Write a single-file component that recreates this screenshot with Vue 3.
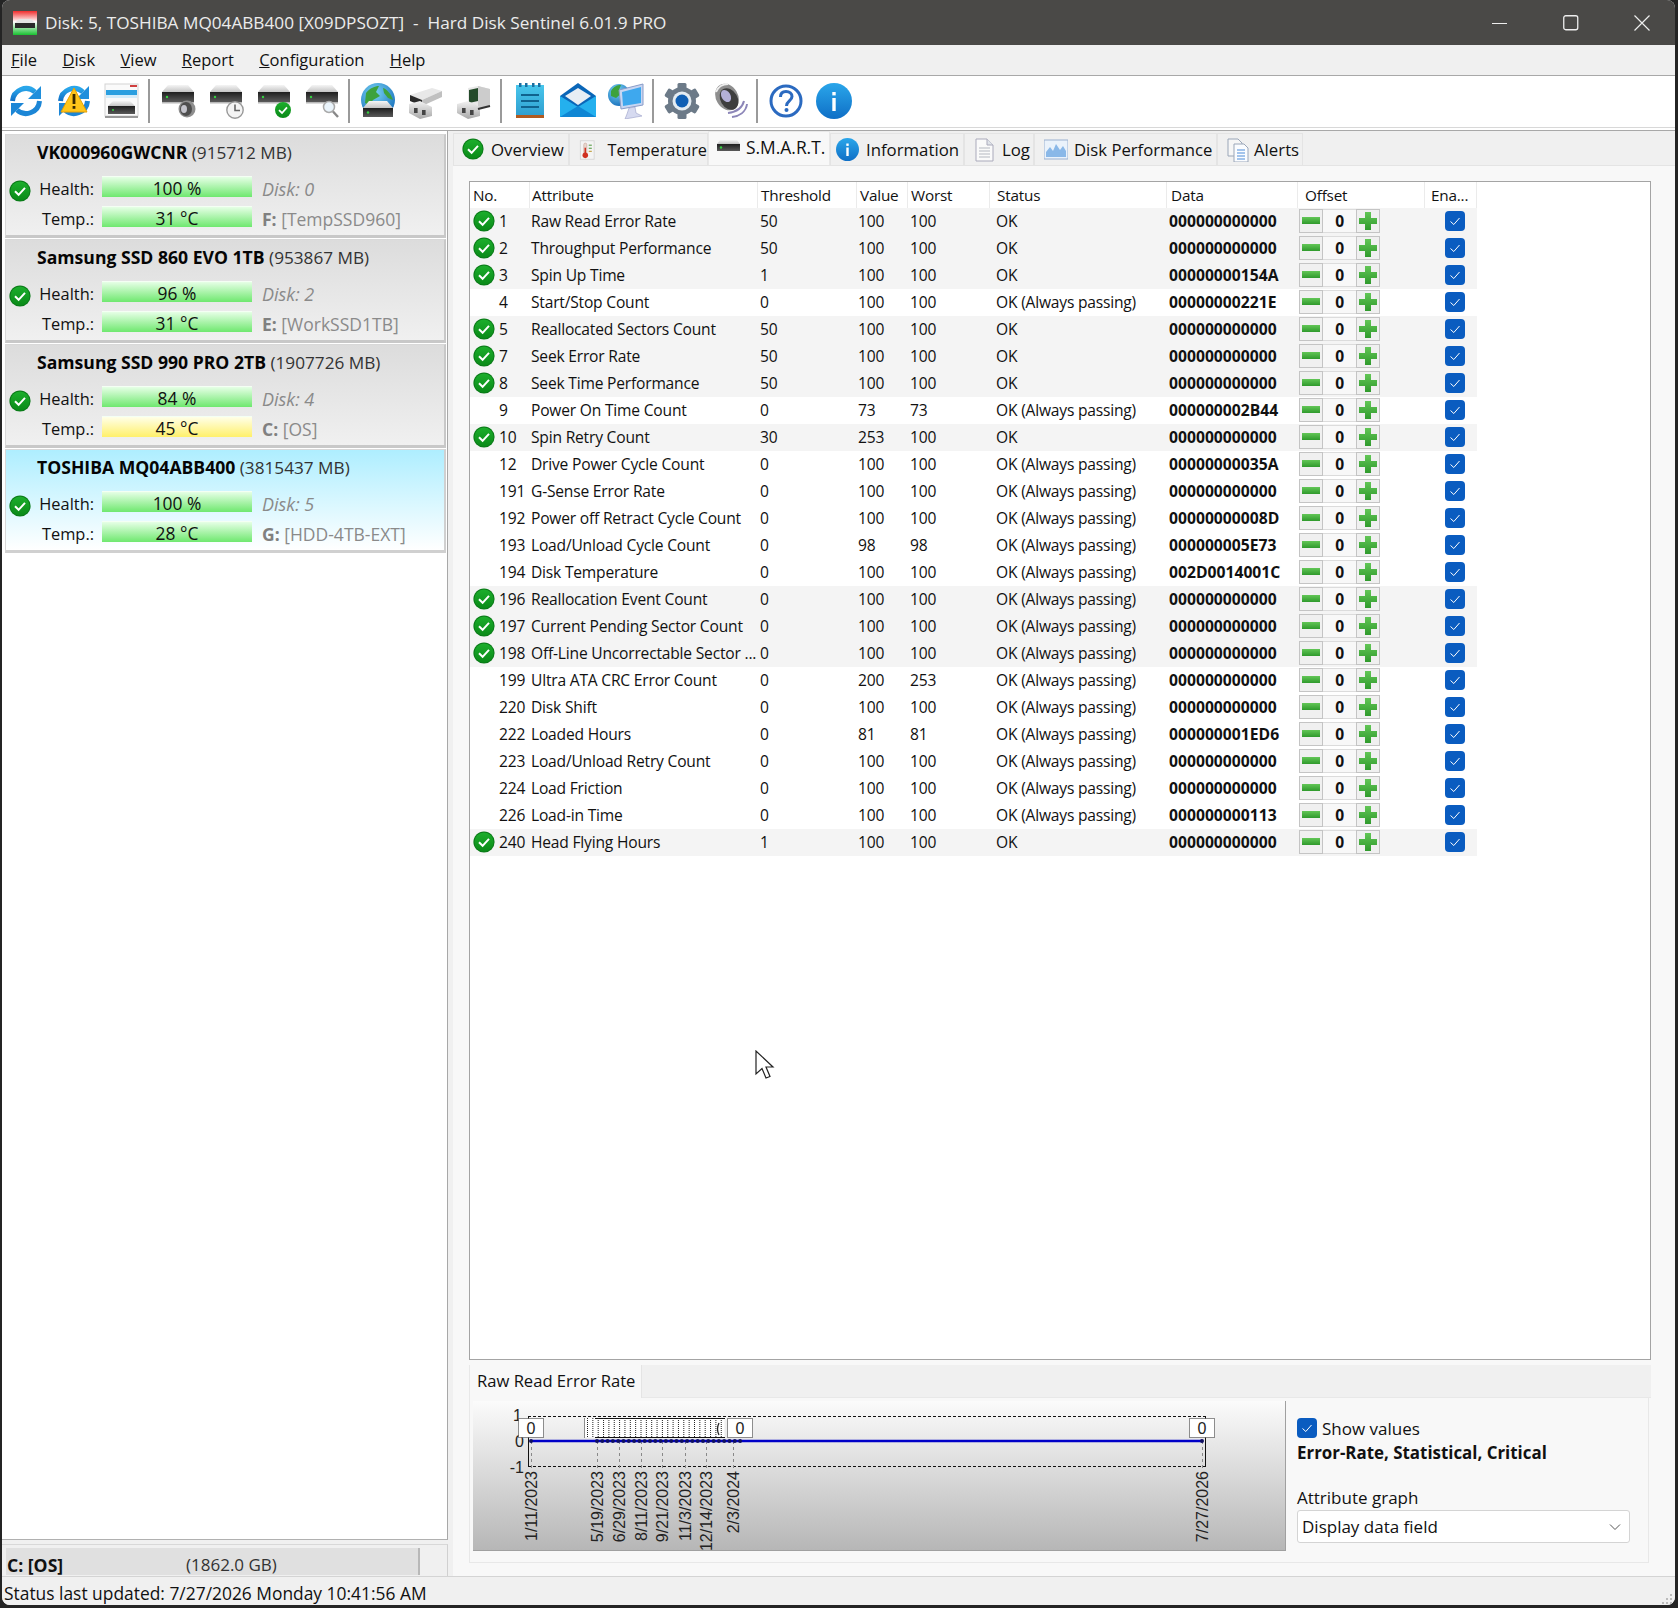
<script setup>
const menus = [['F','ile'],['D','isk'],['V','iew'],['R','eport'],['C','onfiguration'],['H','elp']]
const toolbar = [
  ['refresh','warnrefresh','dlist'],
  ['dspeaker','dclock','dcheck','dsearch'],
  ['globedisk','rem1','rem2'],
  ['note','mail','monitor'],
  ['gear','speaker'],
  ['help','info'],
]
const disks = [
  { name:'VK000960GWCNR', size:'(915712 MB)', health:'100 %', temp:'31 °C', disk:'Disk: 0', vol:'F:', label:'[TempSSD960]', hot:false, sel:false },
  { name:'Samsung SSD 860 EVO 1TB', size:'(953867 MB)', health:'96 %', temp:'31 °C', disk:'Disk: 2', vol:'E:', label:'[WorkSSD1TB]', hot:false, sel:false },
  { name:'Samsung SSD 990 PRO 2TB', size:'(1907726 MB)', health:'84 %', temp:'45 °C', disk:'Disk: 4', vol:'C:', label:'[OS]', hot:true, sel:false },
  { name:'TOSHIBA MQ04ABB400', size:'(3815437 MB)', health:'100 %', temp:'28 °C', disk:'Disk: 5', vol:'G:', label:'[HDD-4TB-EXT]', hot:false, sel:true },
]
const tabs = [
  { t:'Overview', i:'t-check', w:116, pad:8, gap:5, fs:16.8 },
  { t:'Temperature', i:'t-therm', w:139, pad:8, gap:11, fs:16.3 },
  { t:'S.M.A.R.T.', i:'t-disk', w:122, pad:8, gap:5, fs:17.4, active:true },
  { t:'Information', i:'t-info', w:134, pad:5, gap:6, fs:16.8 },
  { t:'Log', i:'t-doc', w:70, pad:8, gap:5, fs:16.8 },
  { t:'Disk Performance', i:'t-perf', w:183, pad:9, gap:6, fs:16.7 },
  { t:'Alerts', i:'t-alert', w:86, pad:9, gap:3, fs:16.8 },
]
const heads = ['No.','Attribute','Threshold','Value','Worst','Status','Data','Offset','Ena...']
const A = 'OK (Always passing)'
const rows = [
  [1,'Raw Read Error Rate',50,100,100,'OK','000000000000',1],
  [2,'Throughput Performance',50,100,100,'OK','000000000000',1],
  [3,'Spin Up Time',1,100,100,'OK','00000000154A',1],
  [4,'Start/Stop Count',0,100,100,A,'00000000221E',0],
  [5,'Reallocated Sectors Count',50,100,100,'OK','000000000000',1],
  [7,'Seek Error Rate',50,100,100,'OK','000000000000',1],
  [8,'Seek Time Performance',50,100,100,'OK','000000000000',1],
  [9,'Power On Time Count',0,73,73,A,'000000002B44',0],
  [10,'Spin Retry Count',30,253,100,'OK','000000000000',1],
  [12,'Drive Power Cycle Count',0,100,100,A,'00000000035A',0],
  [191,'G-Sense Error Rate',0,100,100,A,'000000000000',0],
  [192,'Power off Retract Cycle Count',0,100,100,A,'00000000008D',0],
  [193,'Load/Unload Cycle Count',0,98,98,A,'000000005E73',0],
  [194,'Disk Temperature',0,100,100,A,'002D0014001C',0],
  [196,'Reallocation Event Count',0,100,100,A,'000000000000',1],
  [197,'Current Pending Sector Count',0,100,100,A,'000000000000',1],
  [198,'Off-Line Uncorrectable Sector ...',0,100,100,A,'000000000000',1],
  [199,'Ultra ATA CRC Error Count',0,200,253,A,'000000000000',0],
  [220,'Disk Shift',0,100,100,A,'000000000000',0],
  [222,'Loaded Hours',0,81,81,A,'000000001ED6',0],
  [223,'Load/Unload Retry Count',0,100,100,A,'000000000000',0],
  [224,'Load Friction',0,100,100,A,'000000000000',0],
  [226,'Load-in Time',0,100,100,A,'000000000113',0],
  [240,'Head Flying Hours',1,100,100,'OK','000000000000',1],
]
const dates = [['1/11/2023',531],['5/19/2023',597],['6/29/2023',619],['8/11/2023',641],['9/21/2023',662],['11/3/2023',685],['12/14/2023',706],['2/3/2024',733],['7/27/2026',1202]]
const stripX = Array.from({ length: 26 }, (_, i) => 587.5 + i * 5.35)
const dotX = [531, ...Array.from({ length: 28 }, (_, i) => 597 + i * 5.3), 1202]
</script>

<template>
  <div class="screen">
    <svg class="defs" width="0" height="0" aria-hidden="true">
      <defs>
        <linearGradient id="g-blue" x1="0" y1="0" x2="0" y2="1"><stop offset="0" stop-color="#2aa6ea"/><stop offset="1" stop-color="#0f6fc6"/></linearGradient>
        <linearGradient id="g-dtop" x1="0" y1="0" x2="0" y2="1"><stop offset="0" stop-color="#f5f5f5"/><stop offset="1" stop-color="#c4c4c4"/></linearGradient>
        <linearGradient id="g-dbody" x1="0" y1="0" x2="0" y2="1"><stop offset="0" stop-color="#1e1e1e"/><stop offset="1" stop-color="#5a5a5a"/></linearGradient>
        <linearGradient id="g-title" x1="0" y1="0" x2="0" y2="1"><stop offset="0" stop-color="#f02c2c"/><stop offset=".45" stop-color="#fff"/><stop offset="1" stop-color="#18c030"/></linearGradient>
        <linearGradient id="g-green" x1="0" y1="0" x2="0" y2="1"><stop offset="0" stop-color="#1cae2c"/><stop offset="1" stop-color="#0a8a18"/></linearGradient>
        <linearGradient id="g-gray" x1="0" y1="0" x2="0" y2="1"><stop offset="0" stop-color="#f2f2f2"/><stop offset="1" stop-color="#a8a8a8"/></linearGradient>
        <linearGradient id="g-note" x1="0" y1="0" x2="0" y2="1"><stop offset="0" stop-color="#48c6ec"/><stop offset="1" stop-color="#2f9fd0"/></linearGradient>
        <linearGradient id="g-plus" x1="0" y1="0" x2="0" y2="1"><stop offset="0" stop-color="#62c656"/><stop offset="1" stop-color="#2f9a2c"/></linearGradient>
        <radialGradient id="g-globe" cx=".4" cy=".3" r=".8"><stop offset="0" stop-color="#7ad4f4"/><stop offset="1" stop-color="#1068b8"/></radialGradient>

        <g id="ok">
          <circle cx="11" cy="11" r="10.6" fill="#0a7a18"/>
          <circle cx="11" cy="11" r="9.6" fill="url(#g-green)"/>
          <path d="M6 11.3 9.6 14.8 16 7.8" fill="none" stroke="#fff" stroke-width="2"/>
        </g>
        <g id="disk">
          <path d="M8 2H28L34 9H2Z" fill="url(#g-dtop)"/>
          <rect x="2" y="9" width="32" height="10" fill="url(#g-dbody)"/>
          <rect x="2" y="19" width="32" height="1.5" fill="#b8b8b8"/>
          <circle cx="7" cy="14" r="1.2" fill="#35d040"/>
        </g>
        <g id="refresh">
          <path d="M4.5 18A13.5 13.5 0 0 1 27 9" fill="none" stroke="url(#g-blue)" stroke-width="5"/>
          <path d="M33 3V16H20Z" fill="#1f8fdc"/>
          <path d="M31.5 18A13.5 13.5 0 0 1 9 27" fill="none" stroke="#1c86d6" stroke-width="5"/>
          <path d="M3 33V20H16Z" fill="#1c86d6"/>
        </g>
        <g id="warnrefresh">
          <use href="#refresh"/>
          <path d="M18 5 31 29H5Z" fill="#ffc61a" stroke="#e8a000" stroke-linejoin="round"/>
          <rect x="16.6" y="11" width="2.8" height="10" fill="#3a2a00"/>
          <rect x="16.6" y="23" width="2.8" height="2.8" fill="#3a2a00"/>
        </g>
        <g id="dlist">
          <rect x="1" y="1" width="33" height="32" fill="#fafafa" stroke="#d4d4d4"/>
          <rect x="1" y="33" width="33" height="2" fill="#999"/>
          <path d="M2 7H33V12H2Z" fill="#2b9fe0"/>
          <path d="M2 12H33V15H2Z" fill="#d4ecfa"/>
          <rect x="26" y="2" width="7" height="2" fill="#d04040"/>
          <path d="M9 18H26L31 23H4Z" fill="url(#g-dtop)"/>
          <rect x="4" y="23" width="27" height="8" fill="url(#g-dbody)"/>
          <circle cx="9" cy="27" r="1" fill="#35d040"/>
        </g>
        <g id="dspeaker">
          <use href="#disk"/>
          <circle cx="27" cy="26" r="8.500" fill="#8e8e8e"/><ellipse cx="26" cy="26" rx="6" ry="7" fill="#4e4e4e"/><ellipse cx="24" cy="26" rx="3" ry="4" fill="#c4c4cc"/>
        </g>
        <g id="dclock">
          <use href="#disk"/>
          <circle cx="27" cy="27" r="8.2" fill="#f4f4f4" stroke="#999" stroke-width="1.4"/>
          <path d="M27 21.5V27.5H32" fill="none" stroke="#666" stroke-width="1.6"/>
        </g>
        <g id="dcheck">
          <use href="#disk"/>
          <circle cx="27" cy="27" r="8" fill="url(#g-green)"/>
          <path d="M23 27.2 26 30 31 24.4" fill="none" stroke="#fff" stroke-width="1.8"/>
        </g>
        <g id="dsearch">
          <use href="#disk"/>
          <circle cx="25" cy="24" r="5.5" fill="#eaf4fb" stroke="#aaa" stroke-width="1.5"/>
          <path d="M29 28.5 34 34" stroke="#888" stroke-width="2.4"/>
        </g>
        <g id="globedisk">
          <circle cx="18" cy="17" r="17" fill="url(#g-globe)"/>
          <path d="M6 10C10 5 15 3 19 3L16 9 20 13 13 17 9 22 5 20Z M23 5C27 6 31 11 33 17L28 15 24 10Z" fill="#3da23c"/>
          <path d="M9 18H27L33 25H3Z" fill="url(#g-dtop)"/>
          <rect x="3" y="25" width="30" height="9" fill="url(#g-dbody)"/>
          <circle cx="8" cy="29.500" r="1.200" fill="#35d040"/>
        </g>
        <g id="rem1">
          <path d="M2 12 24 5 34 8 14 17Z" fill="#e8e8e8"/>
          <path d="M14 17 34 8V14L14 23Z" fill="#c0c0c0"/>
          <path d="M2 12 14 17V23L2 18Z" fill="#2a2a2a"/>
          <path d="M1 21 12 18 24 24V33L12 36 1 30Z" fill="url(#g-gray)"/>
          <rect x="6" y="25" width="3.600" height="5" fill="#444"/><rect x="14" y="27" width="3.600" height="5" fill="#444"/>
        </g>
        <g id="rem2">
          <path d="M12 5 22 3 34 6 34 23 22 26 12 23Z" fill="#e8e8e8"/>
          <path d="M22 3 34 6V23L22 26Z" fill="#cccccc"/>
          <path d="M13 7 22 5V18L13 20Z" fill="#244a2a"/>
          <path d="M1 21 12 18 24 24V33L12 36 1 30Z" fill="url(#g-gray)"/>
          <rect x="6" y="25" width="3.600" height="5" fill="#444"/><rect x="14" y="27" width="3.600" height="5" fill="#444"/>
          <path d="M22 26 34 23" stroke="#333" stroke-width="2"/>
        </g>
        <g id="note">
          <rect x="4" y="2" width="28" height="30" fill="url(#g-note)"/>
          <rect x="4" y="32" width="28" height="3" fill="#b05a20"/>
          <g fill="#1a6ea0"><rect x="7" y="0" width="2.500" height="4"/><rect x="13" y="0" width="2.500" height="4"/><rect x="20" y="0" width="2.500" height="4"/><rect x="26" y="0" width="2.500" height="4"/></g>
          <g fill="#10628e"><rect x="9" y="11" width="18" height="2"/><rect x="9" y="17" width="18" height="2"/><rect x="9" y="23" width="18" height="2"/></g>
        </g>
        <g id="mail">
          <path d="M0 13 18 0 36 13V34H0Z" fill="#0a66b8"/>
          <path d="M5 13 18 5 31 13 18 22Z" fill="#e8eef4"/>
          <path d="M0 13 18 24 36 13V34H0Z" fill="#24b0ee"/>
          <path d="M0 34 18 23 36 34Z" fill="#0f86d4"/>
        </g>
        <g id="monitor">
          <circle cx="11" cy="12" r="11" fill="url(#g-globe)"/>
          <path d="M3 8C6 3 9 2 13 2L11 7 14 10 8 15 3 13Z" fill="#3da23c"/>
          <path d="M11 7 35 1V22L13 26Z" fill="#c8d6f2" stroke="#8a9cc8"/>
          <path d="M14 9 33 4V20L15 23Z" fill="#3ea8ee"/>
          <path d="M21 25 27 24 28 30 34 33 17 36 19 31Z" fill="#d6daf0" stroke="#9aa0c8" stroke-width=".6"/>
        </g>
        <g id="gear" fill="#6c7a88">
          <circle cx="18" cy="18" r="14"/>
          <rect x="13.500" y="0" width="9" height="36" rx="1.500"/>
          <rect x="13.500" y="0" width="9" height="36" rx="1.500" transform="rotate(60 18 18)"/>
          <rect x="13.500" y="0" width="9" height="36" rx="1.500" transform="rotate(120 18 18)"/>
          <circle cx="18" cy="18" r="9.500" fill="#e4ecf2"/>
          <circle cx="18" cy="18" r="6.500" fill="#0f5fb4"/>
        </g>
        <g id="speaker">
          <path d="M16 30C24 29 30 26 32 18M20 34C27 33 34 29 35 21" fill="none" stroke="#8c86b8" stroke-width="2"/>
          <ellipse cx="15" cy="14" rx="11" ry="14" fill="#8e8e8e" transform="rotate(-30 15 14)"/>
          <ellipse cx="17" cy="16" rx="8.500" ry="11.500" fill="#3e3e3e" transform="rotate(-30 17 16)"/>
          <ellipse cx="14" cy="13" rx="4.500" ry="6.500" fill="#b4b0d8" transform="rotate(-30 14 13)"/>
          <path d="M4 9C6 4 11 1 16 1" stroke="#eee" stroke-width="2" fill="none"/>
        </g>
        <g id="help">
          <circle cx="18" cy="18" r="15" fill="#fff" stroke="#2b6ac0" stroke-width="3"/>
          <path d="M12.500 14C12.500 10 15 8.500 18 8.500 21.500 8.500 24 10.500 24 13.500 24 18 18.500 18 18.500 23" fill="none" stroke="#2b6ac0" stroke-width="3"/>
          <circle cx="18.500" cy="27" r="2" fill="#2b6ac0"/>
        </g>
        <g id="info">
          <circle cx="18" cy="18" r="18" fill="url(#g-blue)"/>
          <rect x="16.300" y="15" width="3.400" height="13" fill="#fff"/>
          <rect x="16.300" y="9" width="3.400" height="3.400" fill="#fff"/>
        </g>

        <g id="t-check"><use href="#ok"/></g>
        <g id="t-therm">
          <rect x="3" y="0" width="18" height="24" fill="#f4f4f4" stroke="#d0d0d0"/>
          <rect x="7.500" y="3" width="4" height="14" rx="2" fill="#e8d8d0" stroke="#c09080" stroke-width=".6"/>
          <rect x="8.500" y="9" width="2" height="9" fill="#d03020"/>
          <circle cx="9.500" cy="19" r="3.600" fill="#d03020"/>
          <g fill="#60a050"><rect x="14" y="5" width="4" height="1.500"/><rect x="14" y="9" width="4" height="1.500"/></g>
          <g fill="#c0a040"><rect x="14" y="13" width="4" height="1.500"/></g>
        </g>
        <g id="t-disk">
          <path d="M3 5H20L23 9H0Z" fill="url(#g-dtop)"/>
          <rect y="9" width="23" height="7" fill="url(#g-dbody)"/>
          <circle cx="4" cy="12.500" r="1.200" fill="#35d040"/>
        </g>
        <g id="t-info">
          <circle cx="11.500" cy="11.500" r="11.500" fill="url(#g-blue)"/>
          <rect x="10.300" y="9.500" width="2.400" height="8.500" fill="#fff"/>
          <rect x="10.300" y="5.500" width="2.400" height="2.400" fill="#fff"/>
        </g>
        <g id="t-doc">
          <path d="M3 1H14L20 7V23H3Z" fill="#fafafa" stroke="#aab"/>
          <path d="M14 1V7H20" fill="#e0e4ea" stroke="#aab"/>
          <path d="M6 10H17M6 13H17M6 16H17M6 19H17" stroke="#b4b8c0"/>
        </g>
        <g id="t-perf">
          <rect x="0" y="2" width="24" height="19" fill="#eaf2fb" stroke="#9ab0d0"/>
          <path d="M2 19V14L6 9 9 13 12 6 16 12 19 8 22 13V19Z" fill="#8ab8e8"/>
        </g>
        <g id="t-alert">
          <path d="M1 1H11L15 5V18H1Z" fill="#f6f6f6" stroke="#9aa6b8"/>
          <path d="M7 6H17L21 10V24H7Z" fill="#fafcff" stroke="#9aa6b8"/>
          <path d="M10 12H18M10 15H18M10 18H18M10 21H18" stroke="#4c8cd8"/>
        </g>
      </defs>
    </svg>

    <div class="frame">
      <header class="titlebar">
        <svg class="appicon" width="24" height="24" viewBox="0 0 24 24">
          <rect width="24" height="24" fill="url(#g-title)"/>
          <path d="M6 8H18L22 12H2Z" fill="#e4e4e4"/>
          <rect x="2" y="12" width="20" height="5" fill="#2a2a2a"/>
        </svg>
        <span class="titletext">Disk: 5, TOSHIBA MQ04ABB400 [X09DPSOZT]&nbsp;&nbsp;-&nbsp;&nbsp;Hard Disk Sentinel 6.01.9 PRO</span>
        <div class="winctl">
          <svg width="16" height="16" viewBox="0 0 16 16"><path d="M0 8.500H15" stroke="#eee"/></svg>
          <svg width="16" height="16" viewBox="0 0 16 16"><rect x=".75" y=".75" width="14" height="14" rx="2" fill="none" stroke="#eee" stroke-width="1.300"/></svg>
          <svg width="16" height="16" viewBox="0 0 16 16"><path d="M.5.500 15.500 15.500M15.500.500 .5 15.500" stroke="#eee" stroke-width="1.200"/></svg>
        </div>
      </header>

      <nav class="menubar">
        <span v-for="m in menus" :key="m[0]" class="menu"><u>{{ m[0] }}</u>{{ m[1] }}</span>
      </nav>

      <div class="toolbar">
        <template v-for="(grp, gi) in toolbar" :key="gi">
          <span v-if="gi" class="tsep"></span>
          <span v-for="ic in grp" :key="ic" class="tbtn">
            <svg width="36" height="36" viewBox="0 0 36 36"><use :href="'#' + ic"/></svg>
          </span>
        </template>
      </div>
      <div class="rule"></div>

      <div class="body">
        <aside class="left">
          <div class="disklist">
            <div v-for="d in disks" :key="d.name" class="card" :class="{ sel: d.sel }">
              <div class="cardtitle"><b>{{ d.name }}</b>&nbsp;<span class="size">{{ d.size }}</span></div>
              <div class="cardbody">
                <svg class="cardok" width="22" height="22" viewBox="0 0 22 22"><use href="#ok"/></svg>
                <div class="cardrows">
                  <div class="crow">
                    <span class="clabel">Health:</span>
                    <span class="bar">{{ d.health }}</span>
                    <i class="cinfo disknum">{{ d.disk }}</i>
                  </div>
                  <div class="crow">
                    <span class="clabel">Temp.:</span>
                    <span class="bar" :class="{ hot: d.hot }">{{ d.temp }}</span>
                    <span class="cinfo"><b>{{ d.vol }}</b>&nbsp;{{ d.label }}</span>
                  </div>
                </div>
              </div>
            </div>
          </div>
          <div class="volbar">
            <div class="volmain"><b>C: [OS]</b><span class="volsize">(1862.0 GB)</span></div>
            <div class="volside"></div>
          </div>
        </aside>

        <main class="right">
          <div class="tabs">
            <div v-for="t in tabs" :key="t.t" class="tab" :class="{ active: t.active }" :style="{ width: t.w + 'px', paddingLeft: t.pad + 'px', gap: t.gap + 'px', fontSize: t.fs + 'px' }">
              <svg width="24" height="24" viewBox="0 0 24 24"><use :href="'#' + t.i"/></svg>
              <span>{{ t.t }}</span>
            </div>
          </div>
          <div class="content">
            <div class="tablebox">
              <div class="grid head">
                <div v-for="h in heads" :key="h" class="hcell">{{ h }}</div>
              </div>
              <div v-for="r in rows" :key="r[0]" class="grid row" :class="{ flagged: r[7] }">
                <div class="no">
                  <svg v-if="r[7]" class="rowok" width="22" height="22" viewBox="0 0 22 22"><use href="#ok"/></svg>
                  <span class="num">{{ r[0] }}</span>
                </div>
                <div class="attr">{{ r[1] }}</div>
                <div class="c-thr">{{ r[2] }}</div>
                <div class="c-val">{{ r[3] }}</div>
                <div class="c-wor">{{ r[4] }}</div>
                <div class="c-sta">{{ r[5] }}</div>
                <div class="c-dat">{{ r[6] }}</div>
                <div class="offset">
                  <span class="obtn"><i class="minus"></i></span>
                  <span class="oval">0</span>
                  <span class="obtn"><svg width="20" height="20" viewBox="0 0 20 20"><path d="M7 1H13V7H19V13H13V19H7V13H1V7H7Z" fill="url(#g-plus)"/></svg></span>
                </div>
                <div class="ena">
                  <span class="cbox"><svg width="20" height="20" viewBox="0 0 20 20"><path d="M5.500 10.500 8.800 13.500 14.500 7" fill="none" stroke="#fff"/></svg></span>
                </div>
              </div>
              <svg class="cursor" width="20" height="30" viewBox="0 0 20 30">
                <path d="M1 1V24L7 18.500 11 28 15 26.500 11 17H18Z" fill="#fff" stroke="#222" stroke-width="1.200"/>
              </svg>
            </div>

            <div class="gtabstrip"><div class="gtab">Raw Read Error Rate</div></div>
            <div class="graphpanel">
              <svg class="chart" width="813" height="150" viewBox="473 1401 813 150">
                <defs>
                  <linearGradient id="g-chart" x1="0" y1="0" x2="0" y2="1"><stop offset="0" stop-color="#fbfbfb"/><stop offset="1" stop-color="#b6b6b6"/></linearGradient>
                </defs>
                <rect x="473" y="1401" width="813" height="150" fill="url(#g-chart)"/>
                <path d="M473 1550.500H1286M1285.500 1401V1551" stroke="#a0a0a0"/>
                <g class="axis">
                  <text x="522" y="1421" text-anchor="end">1</text>
                  <text x="524" y="1447" text-anchor="end">0</text>
                  <text x="524" y="1473" text-anchor="end">-1</text>
                </g>
                <path d="M528.500 1416V1467M1205.500 1416V1467" stroke="#111"/>
                <path d="M528 1416.500H1206M528 1466.500H1206" stroke="#111" stroke-dasharray="3 2"/>
                <path v-for="d in dates" :key="d[0]" :d="`M${d[1]}.5 1441V1470`" stroke="#888" stroke-dasharray="3 3"/>
                <rect x="584.500" y="1418.500" width="140" height="19" fill="#fff"/>
                <path d="M595 1418.500H725M595 1437.500H725" stroke="#111"/>
                <path v-for="x in stripX" :key="x" :d="`M${x} 1418V1438`" stroke="#222" stroke-dasharray="1 1"/>
                <path d="M719 1423Q716 1429 719 1435" fill="none" stroke="#222" stroke-width="1.300"/>
                <g class="vbox">
                  <rect x="518.500" y="1418.500" width="25" height="19"/>
                  <rect x="727.500" y="1418.500" width="25" height="19"/>
                  <rect x="1189.500" y="1418.500" width="25" height="19"/>
                  <path d="M584.500 1418.500V1437.500"/>
                </g>
                <g class="axis">
                  <text x="531" y="1434" text-anchor="middle">0</text>
                  <text x="740" y="1434" text-anchor="middle">0</text>
                  <text x="1202" y="1434" text-anchor="middle">0</text>
                </g>
                <path d="M531 1441H1202" stroke="#0000c8" stroke-width="2.500"/>
                <circle v-for="x in dotX" :key="x" :cx="x" cy="1441" r="2" fill="#101060"/>
                <text v-for="d in dates" :key="'l' + d[0]" class="dlabel" text-anchor="end" :transform="`translate(${d[1] + 6} 1471) rotate(-90)`">{{ d[0] }}</text>
              </svg>
              <div class="gside">
                <div class="showvals">
                  <span class="cbox"><svg width="20" height="20" viewBox="0 0 20 20"><path d="M5.500 10.500 8.800 13.500 14.500 7" fill="none" stroke="#fff"/></svg></span>
                  <span>Show values</span>
                </div>
                <div class="gbold">Error-Rate, Statistical, Critical</div>
                <div class="glabel">Attribute graph</div>
                <div class="select">
                  <span>Display data field</span>
                  <svg width="12" height="8" viewBox="0 0 12 8"><path d="M1 1.500 6 6.500 11 1.500" fill="none" stroke="#555"/></svg>
                </div>
              </div>
            </div>
          </div>
        </main>
      </div>

      <footer class="status">
        <span>Status last updated: 7/27/2026 Monday 10:41:56 AM</span>
        <svg class="grip" width="12" height="12" viewBox="0 0 12 12" fill="#bbb"><rect x="9" y="1" width="2" height="2"/><rect x="5" y="5" width="2" height="2"/><rect x="9" y="5" width="2" height="2"/><rect x="1" y="9" width="2" height="2"/><rect x="5" y="9" width="2" height="2"/><rect x="9" y="9" width="2" height="2"/></svg>
      </footer>
    </div>
  </div>
</template>

<style>
html, body { margin: 0; background: #242424; }
</style>

<style scoped>
.screen {
  width: 1678px; height: 1608px; box-sizing: border-box; padding: 0 3px 3px 2px;
  background: #242424; overflow: hidden;
  font-family: "Open Sans", "Noto Sans", sans-serif; font-size: 17px; color: #111;
}
.defs { position: absolute; }
.frame {
  height: 1605px; display: flex; flex-direction: column; background: #f0f0f0;
  border-radius: 8px; overflow: hidden;
}
.titlebar {
  height: 45px; flex: none; background: #4a4947; display: flex; align-items: center;
  padding-left: 11px; color: #ececec; white-space: pre; font-size: 17.2px;
}
.appicon { margin-right: 8px; }
.titletext { flex: 1; }
.winctl { display: flex; gap: 55px; padding-right: 25px; }
.menubar {
  flex: none; background: #f0f0f0; border-bottom: 1px solid #a8a8a8;
  display: flex; align-items: center; padding-left: 9px; gap: 25.3px; font-size: 16.5px;
  padding-bottom: 2px; box-sizing: content-box; height: 28px;
}
.toolbar { height: 51px; flex: none; background: #fff; display: flex; align-items: center; padding-bottom: 2px; box-sizing: border-box; }
.tbtn { width: 48px; display: flex; justify-content: center; }
.tsep { width: 8px; height: 44px; box-sizing: border-box; border-left: 2px solid #9a9a9a; position: relative; left: 2px; }
.rule { flex: none; background: #fff; border-top: 1px solid #d8d8d8; border-bottom: 1px solid #a8a8a8; height: 2px; }
.body { flex: 1; display: flex; min-height: 0; }
.left { width: 446px; flex: none; display: flex; flex-direction: column; background: #f0f0f0; }
.disklist { flex: 1; background: #fff; border-right: 1px solid #a8a8a8; border-bottom: 1px solid #b0b0b0; padding: 3px 0 0 3px; margin-bottom: 4px; }
.card {
  width: 441px; height: 104px; box-sizing: border-box; margin-bottom: 1px;
  background: linear-gradient(#dcdcdc, #f0f0f0);
  border: 1px solid #d8d8d8; border-bottom: 3px solid #c8c8c8; border-right: 2px solid #c8c8c8;
}
.card.sel { background: linear-gradient(#aeeeff, #ffffff); border-bottom-color: #d0d0d0; border-right-color: #d0d0d0; }
.cardtitle { height: 36px; line-height: 34px; padding-left: 31px; white-space: pre; }
.cardtitle b { color: #050505; font-size: 17.6px; }
.size { color: #333; font-size: 17.2px; }
.cardbody { display: flex; margin-top: 5px; }
.cardok { margin: 4px 0 0 3px; flex: none; }
.cardrows { display: flex; flex-direction: column; gap: 9px; }
.crow { display: flex; height: 21px; align-items: center; }
.clabel { width: 63px; text-align: right; position: relative; top: 2px; font-size: 16.4px; }
.bar {
  width: 150px; height: 21px; margin-left: 8px; text-align: center; line-height: 23px; box-sizing: border-box;
  background: linear-gradient(#e6ffe6, #6fe86f); border-top: 1px solid #f4fff4; font-size: 17.4px;
}
.bar.hot { background: linear-gradient(#ffffe8, #fff06a); }
.cinfo { margin-left: 10px; color: #8a8a8a; white-space: pre; position: relative; top: 2px; font-size: 17.5px; }
.disknum { font-size: 18px; }
.cinfo b { color: #808080; }
.volbar { height: 32px; flex: none; display: flex; padding: 3px 0 1px 4px; border-right: 1px solid #d0d0d0; border-top: 1px solid #d8d8d8; box-sizing: border-box; }
.volmain { width: 414px; background: #e0e0e0; border-right: 2px solid #b8b8b8; display: flex; align-items: center; padding: 6px 0 0 1px; box-sizing: border-box; }
.volmain b { width: 179px; font-size: 17.6px; }
.volsize { color: #333; }
.volside { flex: 1; }
.right { flex: 1; min-width: 0; display: flex; flex-direction: column; padding-left: 5px; }
.tabs { height: 34px; flex: none; display: flex; align-items: flex-end; }
.tab {
  height: 32px; box-sizing: border-box; display: flex; align-items: center; background: #f0f0f0;
  border: 1px solid #e4e4e4; border-bottom: none; white-space: nowrap;
}
.tab.active { height: 34px; background: #f8f8f8; padding-bottom: 3px; border-color: #e8e8e8; }
.content { flex: 1; background: #f8f8f8; border-top: 1px solid #e4e4e4; padding: 15px 0 0 16px; min-height: 0; }
.tablebox {
  position: relative; font-size: 15.6px; letter-spacing: -0.2px;
  width: 1182px; height: 1179px; box-sizing: border-box; background: #fff;
  border: 1.5px solid #a4a4a4;
}
.grid { display: grid; grid-template-columns: 60px 228px 99px 51px 82px 177px 131px 127px 52px; width: 1007px; }
.head { height: 26px; align-items: stretch; }
.hcell { border-right: 1px solid #ebebeb; padding: 1px 0 0 3px; line-height: 25px; font-size: 15.3px; white-space: nowrap; overflow: hidden; }
.hcell:nth-child(2) { padding-left: 2px; }
.hcell:nth-child(6) { padding-left: 7px; }
.hcell:nth-child(7) { padding-left: 4px; }
.hcell:nth-child(8) { padding-left: 7px; }
.hcell:nth-child(9) { padding-left: 6px; }
.row { height: 27px; align-items: center; white-space: nowrap; background: #fff; }
.row.flagged { background: #f4f4f4; }
.no { display: flex; align-items: center; height: 27px; position: relative; padding: 0 0 2px 29px; box-sizing: border-box; }
.rowok { position: absolute; left: 3px; top: 2px; }
.attr { padding: 0 0 2px 1px; }
.c-thr, .c-wor { padding: 0 0 2px 2px; }
.c-val { padding: 0 0 2px 1px; }
.c-sta { padding: 0 0 2px 6px; }
.c-dat { font-weight: 700; font-size: 15.7px; letter-spacing: 0; padding: 0 0 2px 2px; }
.offset { display: flex; height: 24px; padding-left: 1px; margin-bottom: 2px; }
.obtn { width: 24px; height: 24px; box-sizing: border-box; border: 1px solid #c4c4c4; background: #f0f0f0; display: flex; align-items: center; justify-content: center; }
.oval { width: 33px; height: 24px; box-sizing: border-box; text-align: center; font-weight: 700; line-height: 23px; background: #f8f8f8; border-top: 1px solid #dcdcdc; border-bottom: 1px solid #dcdcdc; }
.minus { display: block; width: 18px; height: 7px; background: linear-gradient(#62c656, #2f9a2c); }
.ena { display: flex; padding-left: 20px; margin-bottom: 1px; }
.cbox { width: 20px; height: 20px; border-radius: 4px; background: #0a5cc0; display: flex; align-items: center; flex: none; }
.cursor { position: absolute; left: 285px; top: 868px; }
.gtabstrip { height: 33px; width: 1182px; box-sizing: border-box; margin-top: 5px; background: #f0f0f0; border-bottom: 1px solid #e8e8e8; }
.gtab { width: 173px; height: 33px; line-height: 32px; padding-left: 7px; box-sizing: border-box; background: #f8f8f8; border-right: 1px solid #e4e4e4; border-left: 1px solid #e8e8e8; font-size: 16.6px; }
.graphpanel { width: 1180px; height: 165px; box-sizing: border-box; display: flex; border: 1px solid #e8e8e8; border-top: none; padding: 3px 0 0 3px; }
.chart { display: block; flex: none; }
.axis { font: 16px "Liberation Sans", Arial, sans-serif; fill: #222; }
.dlabel { font: 16px "Liberation Sans", Arial, sans-serif; fill: #222; }
.vbox rect, .vbox path { fill: #fff; stroke: #222; stroke-dasharray: 1 1; }
.gside { flex: 1; padding: 15px 0 0 11px; }
.showvals { display: flex; align-items: center; gap: 5px; height: 24px; }
.gbold { font-weight: 700; margin-top: 1px; height: 24px; line-height: 24px; font-size: 16.9px; }
.glabel { margin-top: 21px; height: 24px; line-height: 24px; }
.select {
  width: 333px; height: 33px; box-sizing: border-box; background: #fff;
  border: 1px solid #d4d4d4; border-radius: 3px; display: flex; align-items: center;
  justify-content: space-between; padding: 0 8px 0 4px;
}
.status { height: 29px; flex: none; display: flex; align-items: center; justify-content: space-between; padding: 3px 2px 0; background: #f0f0f0; border-top: 1px solid #d4d4d4; box-sizing: border-box; font-size: 17.4px; }
.grip { align-self: flex-end; }
</style>
